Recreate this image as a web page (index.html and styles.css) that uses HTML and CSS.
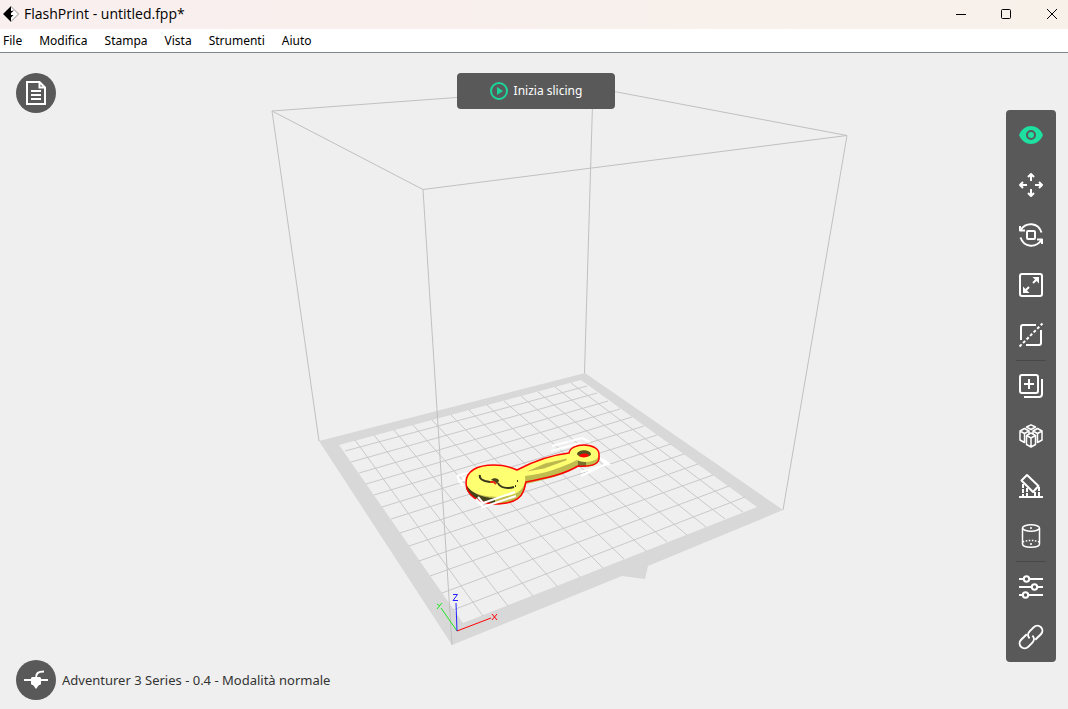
FILE: index.html
```html
<!DOCTYPE html>
<html lang="it">
<head>
<meta charset="utf-8">
<title>FlashPrint - untitled.fpp*</title>
<link rel="stylesheet" href="styles.css">
</head>
<body>
<header class="titlebar">
  <svg class="logo" viewBox="0 0 16 16" aria-hidden="true"><path d="M8 .5 15.500 8 8 15.500 .5 8Z" fill="#fff" stroke="#777" stroke-width=".8"/><path d="M8 .2 .2 8 8 15.800V11.500L10.500 9H8V7L11 4.500 8 5Z" fill="#000"/></svg>
  <h1 class="title">FlashPrint - untitled.fpp*</h1>
  <div class="window-controls">
    <button class="window-button" aria-label="Riduci a icona"><svg viewBox="0 0 12 12"><path d="M1 6.500h10"/></svg></button>
    <button class="window-button" aria-label="Ingrandisci"><svg viewBox="0 0 12 12"><rect x="1.500" y="1.500" width="9" height="9" rx="1"/></svg></button>
    <button class="window-button" aria-label="Chiudi"><svg viewBox="0 0 12 12"><path d="m1 1 10 10M11 1 1 11"/></svg></button>
  </div>
</header>
<nav class="menubar" aria-label="Menu principale">
  <button class="menu-item">File</button>
  <button class="menu-item">Modifica</button>
  <button class="menu-item">Stampa</button>
  <button class="menu-item">Vista</button>
  <button class="menu-item">Strumenti</button>
  <button class="menu-item">Aiuto</button>
</nav>
<main class="workspace">
  <svg class="scene" viewBox="0 53 1068 656" role="img" aria-label="Modello sul piano di stampa">
    <path class="plate" fill-rule="evenodd" d="M319 441 585 373 783 510 648 566 645 579 622 576 452 645ZM339 445 463 623 757 507 581 380Z"/>
    <g class="grid">
      <path d="M355 440 483 616M374 435 508 606M394 430 533 596M413 425 557 586M432 420 580 577M451 415 603 568M469 410 624 559M487 405 646 551M504 401 667 542M521 396 687 535M538 392 706 527M555 387 725 519M571 383 743 512"/>
      <path d="M345 451 587 386M351 462 597 393M359 473 608 401M366 484 620 409M374 495 632 417M382 507 644 426M391 519 657 435M400 533 671 444M409 546 684 454M419 561 698 464M430 576 713 475M442 593 729 486M453 610 745 497"/>
    </g>
    <path class="volume" d="M272 111 423 189.500 847 135.500 593 87.500ZM272 111 319 441M423 189.500 452 645M847 135.500 783 510M593 87.500 584.500 373"/>
    <path class="bounds" d="m552 446 30-8 8 4M551 451l30-8M457 476l10-3M458 482l9-3M457 476l6 10M463 477l5 8M603 459l6 5-28 8M600 458l6 6-25 12"/>
    <path class="model-side" d="M466 481v7c3 9 14 16 28 16 16 1 28-6 30-13l2-7c20-5 38-8 52-18 10 2 20 0 21-6v-6L570 456 520 472Z"/>
    <path class="model-shade" d="M466 482v6c3 9 14 15 29 16v-6c-15 0-27-7-29-16Z"/>
    <path class="model-shade-soft" d="M578 460v6c3 1 6 1 8 0v-6Z"/>
    <path class="model-top" d="M466 480c1-10 12-15 28-15 10 0 17 2 23 5 17-9 34-15 52-17 1-5 7-8 15-8 9 0 15 4 15 9s-6 8-14 8c-3 0-6-1-8-2-16 8-33 14-52 16 2 13-9 21-27 21-20 0-33-7-32-17Z"/>
    <path class="model-groove" d="m527 471.500 18-8 22-5-1 2-22 8Z"/>
    <path class="model-ring" d="M577 454c1-5 13-5 14 0 0 4-13 4-14 0Z"/>
    <path class="model-ring-floor" d="M579 456c2-3 7-3 10-1-1 3-8 3-10 1Z"/>
    <path class="model-face" d="M480 475c-1 3 2 5 5 6l5 1M498 483c2 5 10 6 16 4M517 481h1M515 486h1"/>
    <path class="model-shade" d="M491 480c2-3 8-2 8 1l-2 3c-1-2-3-3-6-4Z"/>
    <path class="model-mouth" d="m490 482 4 0 2 2"/>
    <path class="model-outline" d="M523 492c-3 8-14 12-29 12-16-1-28-9-28-21 0-12 11-18 28-18 10 0 17 2 23 5 17-9 34-15 52-17 1-5 7-8 15-8 9 0 15 4 15 9v5c-1 6-10 8-21 7-13 8-31 12-52 16-1 3-1 6-3 10Z"/>
    <path class="bounds" d="m476 499 7 8 33-11M478 497l5 6 32-11"/>
    <path class="axis-x" d="m457 631 34-13m1-4 5 6m0-6-5 6"/>
    <path class="axis-y" d="m457 631-16-23m-4-4 3 2m2-3-5 6"/>
    <path class="axis-z" d="m457 631-1-28m-3-8.500h4.500l-4.500 6h5"/>
  </svg>

  <button class="round-button file-button" aria-label="Elenco file"><svg viewBox="0 0 24 24"><path d="M3 1h12.500L21 6.500V23H3ZM15.500 1v5.500H21M7 10h10M7 14h10M7 18h10"/></svg></button>

  <button class="slice-button"><svg viewBox="0 0 18 18" aria-hidden="true"><circle cx="9" cy="9" r="8"/><path d="m7 5 6 4-6 4Z"/></svg>Inizia slicing</button>

  <div class="toolbar" role="toolbar" aria-label="Strumenti">
    <button class="tool active" aria-label="Vista"><svg viewBox="0 0 24 24"><path fill="currentColor" stroke="none" d="M0 12C5 0 19 0 24 12 19 24 5 24 0 12Z"/><circle class="pupil" cx="12" cy="12" r="4"/></svg></button>
    <button class="tool" aria-label="Sposta"><svg viewBox="0 0 24 24"><path d="M12 8V1M9 4l3-3 3 3M12 16v7M9 20l3 3 3-3M8 12H1M4 9l-3 3 3 3M16 12h7M20 9l3 3-3 3"/></svg></button>
    <button class="tool" aria-label="Ruota"><svg viewBox="0 0 24 24"><rect x="8" y="8" width="8" height="8" rx="1"/><path d="M1 3v4.500h5M1.500 7C7-1 19-1 22.500 9.500M23 21v-4.500h-5M22.500 17C17 25 5 25 1.500 14.500"/></svg></button>
    <button class="tool" aria-label="Scala"><svg viewBox="0 0 24 24"><rect x="1" y="1" width="22" height="22" rx="2"/><path d="m14 10 4-4M10 14l-4 4"/><path fill="currentColor" stroke="none" d="M13.500 4H20v6.500ZM4 13.500V20h6.500Z"/></svg></button>
    <button class="tool" aria-label="Taglia"><svg viewBox="0 0 24 24"><path d="M17 2H4Q2 2 2 4v13M22 7v13q0 2-2 2H7"/><path stroke-dasharray="3 2" d="M.5 23.500l23-23"/></svg></button>
    <hr class="separator">
    <button class="tool" aria-label="Duplica"><svg viewBox="0 0 24 24"><rect x="1" y="1" width="18" height="18" rx="2"/><path d="M10 5v10M5 10h10M23 5v15q0 3-3 3H5"/></svg></button>
    <button class="tool" aria-label="Disposizione automatica"><svg class="fine" viewBox="0 0 24 24"><path d="m12 .8 4.500 2.200L12 5.500 7.500 3ZM5.500 4.500 10 7 5.500 9.500 1 7ZM18.500 4.500 23 7l-4.500 2.500L14 7ZM12 9l4.500 2.500L12 14l-4.500-2.500ZM1 7v9l4.500 2.500v-9M23 7v9l-4.500 2.500v-9M7.500 11.500v9L12 23l4.500-2.500v-9M12 14v9M10 7v2.500M14 7v2.500"/></svg></button>
    <button class="tool" aria-label="Supporti"><svg viewBox="0 0 24 24"><path d="M8 1 19.500 12 14 18 2.500 6.500ZM0 23h24"/><path stroke-dasharray="4 1" d="M4 10v12M8 14v8M16 18v4M20 13v9"/></svg></button>
    <button class="tool" aria-label="Base di stampa"><svg class="fine" viewBox="0 0 24 24"><ellipse cx="12" cy="4" rx="8.500" ry="3.200"/><path d="M3.500 4v16c0 4.200 17 4.200 17 0V4M12 3v2M12 19v2"/><path stroke-dasharray="1.500 1.500" d="M4 18c3-2 13-2 16 0"/></svg></button>
    <hr class="separator">
    <button class="tool" aria-label="Regolazioni"><svg viewBox="0 0 24 24"><path d="M0 4h5M10 4h14M0 12h13M18 12h6M0 20h4M9 20h15"/><circle cx="7.500" cy="4" r="2.700"/><circle cx="15.500" cy="12" r="2.700"/><circle cx="6.500" cy="20" r="2.700"/></svg></button>
    <button class="tool" aria-label="Collega"><svg viewBox="0 0 24 24"><g transform="rotate(-45 12 12)"><path d="M11 7H3a5 5 0 0 0 0 10h6a5 5 0 0 0 5-5M13 17h8a5 5 0 0 0 0-10h-6a5 5 0 0 0-5 5"/></g></svg></button>
  </div>

  <div class="status">
    <button class="round-button" aria-label="Impostazioni macchina"><svg viewBox="0 0 24 24"><path d="M0 12h24M12 10c0-5 2-6.500 8-6.500"/><path fill="currentColor" stroke="none" d="M8 9h8l1 1v6l-1 1h-1l-3 4-3-4H8l-1-1v-6Z"/></svg></button>
    <span>Adventurer 3 Series - 0.4 - Modalità normale</span>
  </div>
</main>
</body>
</html>
```
FILE: styles.css
```css
* { box-sizing: border-box; }

body {
  margin: 0;
  min-height: 100vh;
  display: flex;
  flex-direction: column;
  background: #efefef;
  color: #000;
  font: 13px/20px "Noto Sans", sans-serif;
}

button {
  margin: 0;
  padding: 0;
  border: 0;
  background: none;
  color: inherit;
  font: inherit;
}

svg { display: block; fill: none; overflow: visible; }

.titlebar {
  display: flex;
  align-items: center;
  height: 29px;
  padding: 0 0 2px 3px;
  gap: 5px;
  background: linear-gradient(90deg, #f9efef, #f8f1ea);
}

.logo { width: 16px; height: 16px; }
.title { margin: 0; font: 14px/20px "Open Sans", sans-serif; }
.window-controls { display: flex; margin-left: auto; }

.window-button {
  display: grid;
  place-items: center;
  width: 45px;
  height: 27px;
}

.window-button:last-child { width: 40px; padding-left: 8px; }
.window-button svg { width: 12px; height: 12px; stroke: #000; }

.menubar {
  display: flex;
  gap: 17px;
  height: 24px;
  padding-left: 3px;
  background: #fff;
  border-bottom: 1px solid #7f8590;
  font-size: 12px;
}

.workspace { position: relative; flex: 1; display: grid; }
.scene { width: 100%; height: 100%; }

.plate { fill: #d8d8d8; }
.grid { stroke: #c9c9c9; }
.volume { stroke: #c0c0c0; }
.bounds { stroke: #fff; stroke-width: 2; }
.model-side { fill: #bfbc50; }
.model-top { fill: #ffff72; }
.model-shade { fill: #45431b; }
.model-shade-soft { fill: #77732e; }
.model-groove { fill: #bcb94f; }
.model-ring { fill: #55511e; }
.model-ring-floor { fill: #f00; }
.model-face { stroke: #38351b; stroke-width: 2; }
.model-mouth { stroke: #e12a14; stroke-width: 2; }
.model-outline { stroke: #f00; stroke-width: 1.5; }
.axis-x { stroke: #f00; }
.axis-y { stroke: #1de81d; }
.axis-z { stroke: #22f; }

.round-button {
  display: grid;
  place-items: center;
  width: 40px;
  height: 40px;
  border-radius: 50%;
  background: #595959;
  color: #fff;
}

.round-button svg { width: 24px; height: 24px; stroke: currentColor; stroke-width: 2; }
.file-button { position: absolute; left: 16px; top: 20px; }

.slice-button {
  position: absolute;
  top: 20px;
  left: 50%;
  display: flex;
  align-items: center;
  justify-content: center;
  gap: 6px;
  width: 158px;
  height: 36px;
  margin-left: -77px;
  border-radius: 4px;
  background: #595959;
  color: #fff;
  font-size: 12px;
}

.slice-button svg { width: 18px; height: 18px; stroke: #1ad69a; stroke-width: 2; }
.slice-button path { fill: #1ad69a; stroke: none; }

.toolbar {
  position: absolute;
  top: 57px;
  right: 12px;
  display: flex;
  flex-direction: column;
  width: 50px;
  border-radius: 4px;
  background: #595959;
  color: #fff;
}

.tool { display: grid; place-items: center; height: 50px; }
.tool svg { width: 24px; height: 24px; stroke: currentColor; stroke-width: 2; stroke-linejoin: round; }
.tool .fine { stroke-width: 1.5; }
.active { color: #1de0a1; }
.tool .pupil { stroke: #595959; }
.separator { width: 30px; height: 1px; margin: 0 auto; border: 0; background: #484848; }

.status {
  position: absolute;
  left: 16px;
  bottom: 9px;
  display: flex;
  align-items: center;
  gap: 6px;
  color: #333;
}
```
